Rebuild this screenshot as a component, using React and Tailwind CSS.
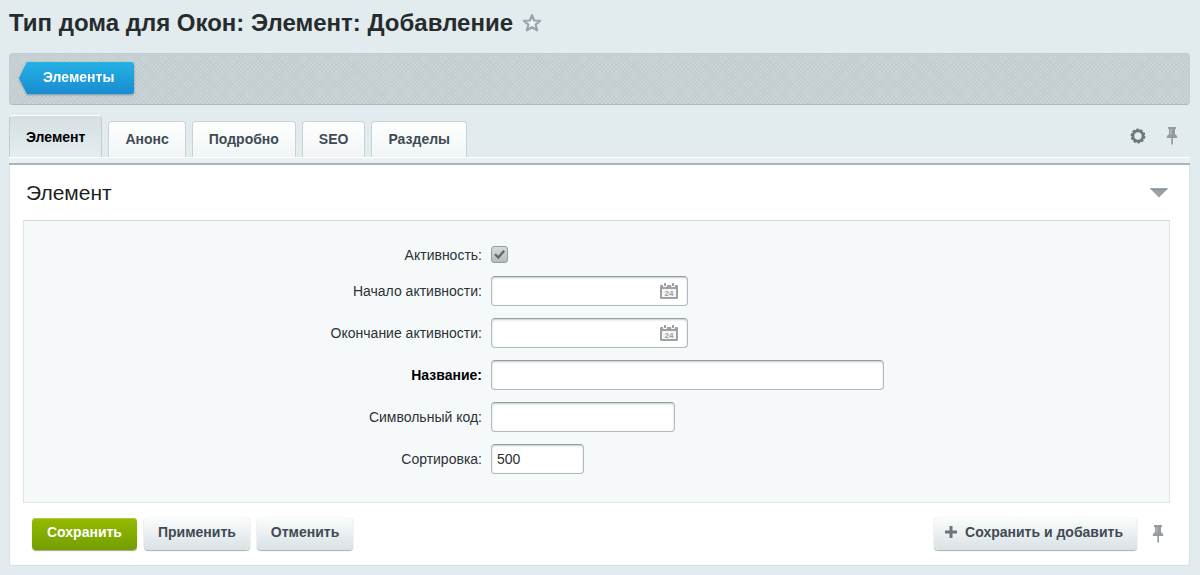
import { useState } from "react";
import clsx from "clsx";

const TABS = ["Элемент", "Анонс", "Подробно", "SEO", "Разделы"];

const FIELD =
  "h-[30px] rounded-[4px] border border-[#b3babf] border-t-[#959ea5] bg-white px-[5px] text-[14px] text-[#2a2f33] shadow-[inset_0_1px_2px_rgba(120,135,145,0.45)] outline-none focus:border-[#6fa8c7]";

const GREY_BUTTON =
  "h-8 rounded-[4px] bg-linear-to-b from-[#fbfcfc] to-[#d9e2e5] pb-1 text-[14px] font-bold text-[#3f4b54] shadow-[0_1px_1px_rgba(0,0,0,0.3),0_0_1px_rgba(0,0,0,0.3)] cursor-pointer";

function StarIcon() {
  return (
    <svg width="20" height="20" viewBox="0 0 20 20" aria-hidden="true">
      <path
        d="M10 2.2l2.2 5.3 5.8.4-4.4 3.7 1.5 5.7-5.1-3.1-5.100 3.100 1.500-5.700L2 7.900l5.800-.4z"
        fill="#eef2f4"
        stroke="#9ba5af"
        strokeWidth="2.2"
        strokeLinejoin="round"
      />
    </svg>
  );
}

function GearIcon() {
  return (
    <svg width="16" height="16" viewBox="0 0 16 16" aria-hidden="true">
      <circle cx="8" cy="8" r="5.1" fill="none" stroke="#6d777b" strokeWidth="2.8" />
      <circle
        cx="8"
        cy="8"
        r="6.7"
        fill="none"
        stroke="#6d777b"
        strokeWidth="1.4"
        strokeDasharray="2.7 1.51"
      />
    </svg>
  );
}

function PinIcon() {
  return (
    <svg width="12" height="20" viewBox="0 0 12 20" aria-hidden="true">
      <path
        d="M2 1h8v2H9v5.2c1.3.6 2 1.500 2.200 2.800v1H7v6.500H5.300V12H.8v-1C1 9.700 1.700 8.800 3 8.200V3H2z"
        fill="#959b9e"
      />
      <path d="M4 3.200h1.600v5H4z" fill="#b5babc" />
    </svg>
  );
}

function CalendarIcon() {
  return (
    <svg width="18" height="16" viewBox="0 0 18 16" aria-hidden="true">
      <path d="M1 2h16q1 0 1 1v12q0 1-1 1H1q-1 0-1-1V3q0-1 1-1z" fill="#9da1a4" />
      <rect x="2" y="6" width="14" height="8" fill="#f4f5f5" />
      <rect x="3" y="0" width="4" height="4" rx="1" fill="#fff" />
      <rect x="11" y="0" width="4" height="4" rx="1" fill="#fff" />
      <rect x="4" y="0" width="2" height="3" fill="#9da1a4" />
      <rect x="12" y="0" width="2" height="3" fill="#9da1a4" />
      <text x="9" y="13" textAnchor="middle" fontSize="8" fontWeight="bold" fill="#9da1a4">
        24
      </text>
    </svg>
  );
}

function Row({ id, label, required, children }) {
  return (
    <div className="flex h-[42px] items-center gap-[9px]">
      <label
        htmlFor={id}
        className={clsx(
          "w-2/5 shrink-0 text-right text-[14px] leading-5",
          required ? "font-bold text-black" : "text-[#2d3236]"
        )}
      >
        {label}:
      </label>
      {children}
    </div>
  );
}

function DateField({ id }) {
  return (
    <div className="relative">
      <input id={id} type="text" className={clsx(FIELD, "w-[197px] pr-9")} />
      <button
        type="button"
        aria-label="Календарь"
        className="absolute right-[10px] top-[7px] cursor-pointer"
      >
        <CalendarIcon />
      </button>
    </div>
  );
}

export default function App() {
  const [tab, setTab] = useState("Элемент");
  const [active, setActive] = useState(true);
  const [open, setOpen] = useState(true);

  return (
    <main className="min-h-screen bg-[#e2ebed] pb-2 pl-[9px] pr-[10px] font-['Liberation_Sans',Arial,sans-serif]">
      <header className="flex h-[53px] items-center gap-[9px] pb-[7px]">
        <h1 className="text-[24px] font-bold leading-8 text-[#262b2e]">
          Тип дома для Окон: Элемент: Добавление
        </h1>
        <button type="button" aria-label="В избранное" className="cursor-pointer">
          <StarIcon />
        </button>
      </header>

      <nav className="flex h-[52px] items-center rounded-[4px] border border-[#c2cdcf] border-b-[#adb9bb] bg-[#cad4d6] bg-[repeating-linear-gradient(45deg,#c3cdcf_0_1px,transparent_1px_3px),repeating-linear-gradient(-45deg,#c3cdcf_0_1px,transparent_1px_3px)] px-[9px] pb-[2px]">
        <a
          href="#elements"
          className="drop-shadow-[0_1px_1px_rgba(0,60,100,0.4)]"
        >
          <span className="block h-8 rounded-r-[3px] bg-linear-to-b from-[#25b1e4] to-[#1a8cd0] pl-6 pr-5 text-[14px] font-bold leading-[30px] text-white [clip-path:polygon(8px_0,100%_0,100%_100%,8px_100%,0_50%)]">
            Элементы
          </span>
        </a>
      </nav>

      <div className="mt-[10px] flex items-end justify-between">
        <div className="flex items-end gap-[6px]" role="tablist">
          {TABS.map((name) => (
            <button
              key={name}
              type="button"
              role="tab"
              aria-selected={tab === name}
              onClick={() => setTab(name)}
              className={clsx(
                "cursor-pointer rounded-t-[4px] border border-b-0 px-4 text-[14px] font-bold",
                tab === name
                  ? "h-[42px] border-[#c3cdd0] border-t-white bg-linear-to-b from-[#d5dfe1] to-[#e4edef] pt-[2px] text-black"
                  : "h-9 border-[#c9d2d5] bg-linear-to-b from-white to-[#f1f5f6] text-[#3f4b54]"
              )}
            >
              {name}
            </button>
          ))}
        </div>
        <div className="flex h-[42px] items-center gap-5 pr-3">
          <button type="button" aria-label="Настройки" className="cursor-pointer">
            <GearIcon />
          </button>
          <button type="button" aria-label="Закрепить вкладки" className="cursor-pointer">
            <PinIcon />
          </button>
        </div>
      </div>

      <div className="h-2 border-b-2 border-t border-b-[#adb4b7] border-t-white bg-[#e9f1f3]" />

      <section className="rounded-b-[3px] border border-t-0 border-[#d9e2e4] bg-white">
        <div className="flex h-[55px] items-center justify-between pl-4 pr-5">
          <h2 className="text-[21px] leading-7 text-[#1c1f21]">Элемент</h2>
          <button
            type="button"
            aria-label="Свернуть"
            className="cursor-pointer"
            onClick={() => setOpen((o) => !o)}
          >
            <svg width="20" height="10" viewBox="0 0 20 10" aria-hidden="true">
              <path d="M1 .5h18L10 9.500z" fill="#9aa0a3" />
              <path d="M1 .5h18l-1 1H2z" fill="#7d8488" />
            </svg>
          </button>
        </div>

        {open && (
          <form className="ml-[13px] mr-[19px] border border-[#dce4e6] border-t-[#cdd5d8] bg-[#f5f9fa] pb-[22px] pt-[18px]">
            <div className="flex h-[31px] items-center gap-[9px]">
              <label
                htmlFor="active"
                className="w-2/5 shrink-0 text-right text-[14px] leading-5 text-[#2d3236]"
              >
                Активность:
              </label>
              <div className="relative size-[17px]">
                <input
                  id="active"
                  type="checkbox"
                  checked={active}
                  onChange={(e) => setActive(e.target.checked)}
                  className="block size-[17px] cursor-pointer appearance-none rounded-[3px] border border-[#969c9f] bg-linear-to-b from-[#d6d9da] to-[#b7bbbd]"
                />
                {active && (
                  <svg
                    className="pointer-events-none absolute inset-0"
                    width="17"
                    height="17"
                    viewBox="0 0 17 17"
                    aria-hidden="true"
                  >
                    <path
                      d="M4 8.200l3.300 3.300L13.200 4.800"
                      fill="none"
                      stroke="#62676a"
                      strokeWidth="2.300"
                    />
                  </svg>
                )}
              </div>
            </div>

            <Row id="date-from" label="Начало активности">
              <DateField id="date-from" />
            </Row>
            <Row id="date-to" label="Окончание активности">
              <DateField id="date-to" />
            </Row>
            <Row id="name" label="Название" required>
              <input id="name" type="text" className={clsx(FIELD, "w-[393px]")} />
            </Row>
            <Row id="code" label="Символьный код">
              <input id="code" type="text" className={clsx(FIELD, "w-[184px]")} />
            </Row>
            <Row id="sort" label="Сортировка">
              <input id="sort" type="text" defaultValue="500" className={clsx(FIELD, "w-[93px]")} />
            </Row>
          </form>
        )}

        <footer className="flex h-[62px] items-center justify-between pl-[22px] pr-[25px]">
          <div className="flex gap-[7px]">
            <button
              type="button"
              className="h-8 cursor-pointer rounded-[4px] bg-linear-to-b from-[#97ba00] to-[#729e00] px-[15px] pb-1 text-[14px] font-bold text-white shadow-[0_1px_1px_rgba(60,80,0,0.5),inset_0_1px_0_#b0cb3a]"
            >
              Сохранить
            </button>
            <button type="button" className={clsx(GREY_BUTTON, "px-[14px]")}>
              Применить
            </button>
            <button type="button" className={clsx(GREY_BUTTON, "px-[14px]")}>
              Отменить
            </button>
          </div>
          <div className="flex items-center gap-[15px]">
            <button
              type="button"
              className={clsx(GREY_BUTTON, "flex items-center gap-2 pl-[11px] pr-[14px]")}
            >
              <svg width="12" height="12" viewBox="0 0 12 12" aria-hidden="true">
                <path d="M4.500 0h3v4.500H12v3H7.500V12h-3V7.500H0v-3h4.500z" fill="#6b7679" />
              </svg>
              Сохранить и добавить
            </button>
            <button type="button" aria-label="Закрепить панель" className="cursor-pointer">
              <PinIcon />
            </button>
          </div>
        </footer>
      </section>
    </main>
  );
}
